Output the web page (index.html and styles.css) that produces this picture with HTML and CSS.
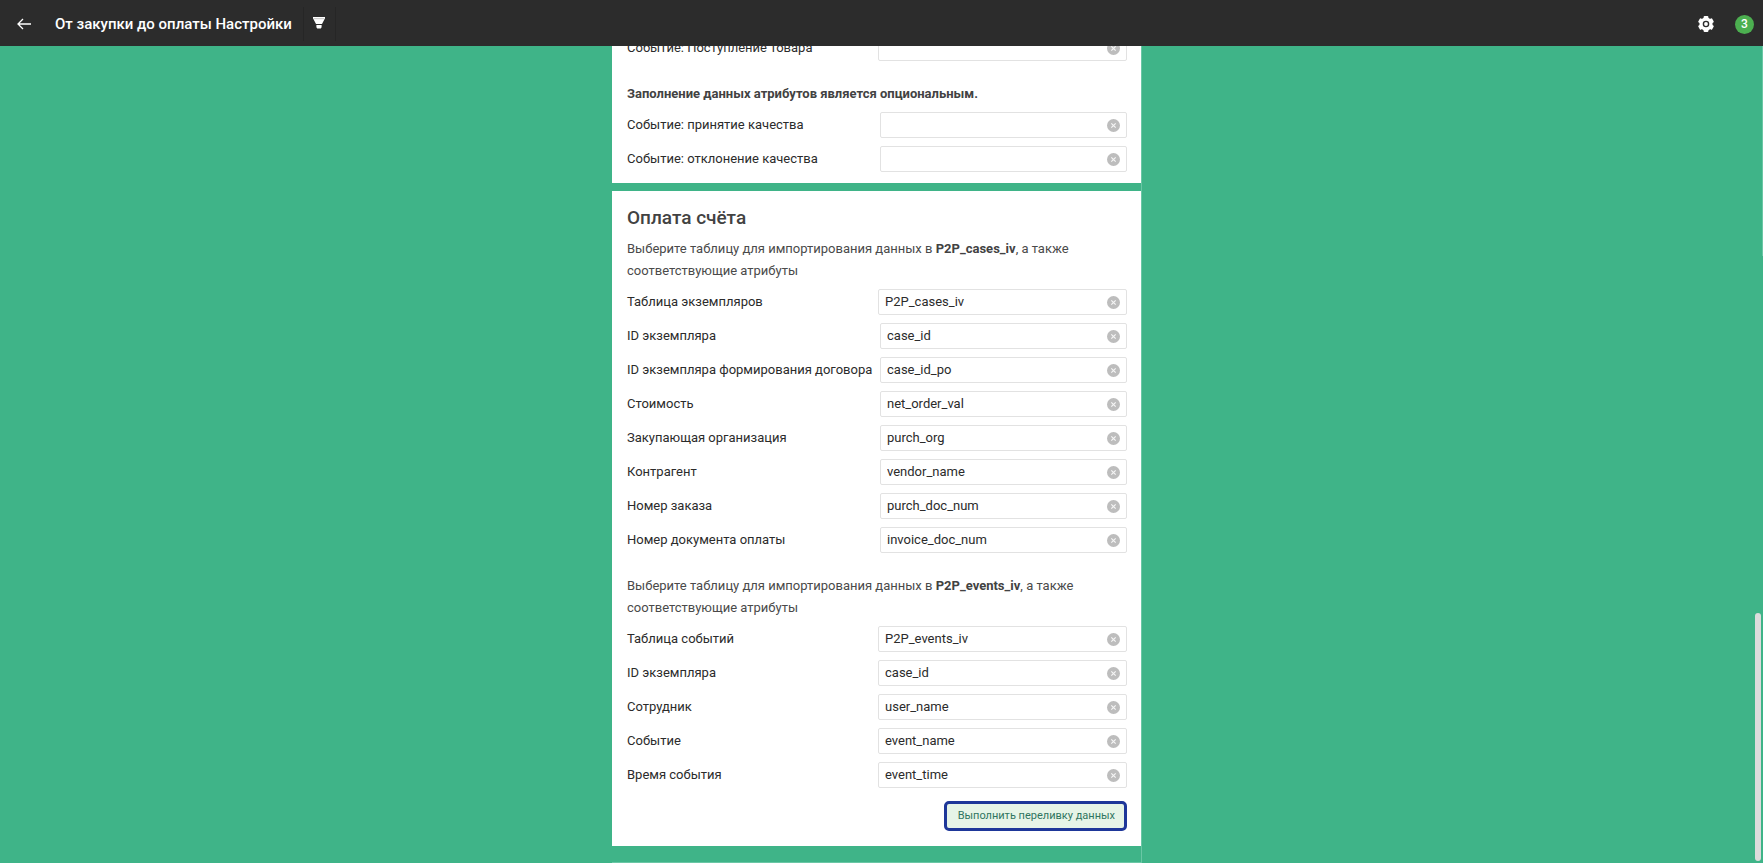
FILE: index.html
```html
<!DOCTYPE html>
<html lang="ru">
<head>
<meta charset="utf-8">
<title>От закупки до оплаты Настройки</title>
<link rel="stylesheet" href="styles.css">
</head>
<body>
<header class="topbar">
  <button class="icon-button back" type="button" aria-label="Назад">
    <svg width="14" height="12" viewBox="0 0 14 12" fill="none" stroke="currentColor" stroke-width="1.300"><path d="M14 6H1.200M6 1L1 6l5 5"/></svg>
  </button>
  <h1 class="title">От закупки до оплаты Настройки</h1>
  <button class="icon-button filter" type="button" aria-label="Фильтр">
    <svg width="12" height="12" viewBox="0 0 12 12" fill="currentColor"><path d="M0 0h12v1.200L9 7H3L0 1.200zM3.400 7.900h5.200v2.400L7.800 11.500H4.200l-.8-1.200z"/><path d="M1 1.700h10" stroke="#9a9a9a" stroke-width=".6"/></svg>
  </button>
  <button class="icon-button settings" type="button" aria-label="Настройки">
    <svg width="18" height="18" viewBox="0 0 18 18"><g fill="#fff"><circle cx="9" cy="9" r="6.600"/><g id="teeth"><rect x="6.600" y="1" width="4.800" height="16" rx="1"/><rect x="6.600" y="1" width="4.800" height="16" rx="1" transform="rotate(60 9 9)"/><rect x="6.600" y="1" width="4.800" height="16" rx="1" transform="rotate(120 9 9)"/></g></g><circle cx="9" cy="9" r="2.600" fill="none" stroke="#2c2c2c" stroke-width="1.400"/></svg>
  </button>
  <span class="badge">3</span>
</header>

<svg class="defs" aria-hidden="true"><symbol id="clear" viewBox="0 0 13 13"><circle cx="6.500" cy="6.500" r="6.500" fill="#bdbdbd"/><path d="M4.300 4.300l4.400 4.400M8.700 4.300L4.300 8.700" stroke="#f4f4f4" stroke-width="1.200"/></symbol></svg>

<main class="page">
  <div class="board">
    <section class="card">
      <div class="rows">
        <div class="row"><label for="a1">Событие: Поступление товара</label><span class="field wide"><input id="a1" type="text"><button class="clear" type="button" aria-label="Очистить"><svg><use href="#clear"/></svg></button></span></div>
      </div>
      <p class="note next"><strong>Заполнение данных атрибутов является опциональным.</strong></p>
      <div class="rows">
        <div class="row"><label for="a2">Событие: принятие качества</label><span class="field"><input id="a2" type="text"><button class="clear" type="button" aria-label="Очистить"><svg><use href="#clear"/></svg></button></span></div>
        <div class="row"><label for="a3">Событие: отклонение качества</label><span class="field"><input id="a3" type="text"><button class="clear" type="button" aria-label="Очистить"><svg><use href="#clear"/></svg></button></span></div>
      </div>
    </section>

    <section class="card payment">
      <h2 class="heading">Оплата счёта</h2>
      <p class="note">Выберите таблицу для импортирования данных в <strong>P2P_cases_iv</strong>, а также соответствующие атрибуты</p>
      <div class="rows">
        <div class="row"><label for="b1">Таблица экземпляров</label><span class="field wide"><input id="b1" type="text" value="P2P_cases_iv"><button class="clear" type="button" aria-label="Очистить"><svg><use href="#clear"/></svg></button></span></div>
        <div class="row"><label for="b2">ID экземпляра</label><span class="field"><input id="b2" type="text" value="case_id"><button class="clear" type="button" aria-label="Очистить"><svg><use href="#clear"/></svg></button></span></div>
        <div class="row"><label for="b3">ID экземпляра формирования договора</label><span class="field"><input id="b3" type="text" value="case_id_po"><button class="clear" type="button" aria-label="Очистить"><svg><use href="#clear"/></svg></button></span></div>
        <div class="row"><label for="b4">Стоимость</label><span class="field"><input id="b4" type="text" value="net_order_val"><button class="clear" type="button" aria-label="Очистить"><svg><use href="#clear"/></svg></button></span></div>
        <div class="row"><label for="b5">Закупающая организация</label><span class="field"><input id="b5" type="text" value="purch_org"><button class="clear" type="button" aria-label="Очистить"><svg><use href="#clear"/></svg></button></span></div>
        <div class="row"><label for="b6">Контрагент</label><span class="field"><input id="b6" type="text" value="vendor_name"><button class="clear" type="button" aria-label="Очистить"><svg><use href="#clear"/></svg></button></span></div>
        <div class="row"><label for="b7">Номер заказа</label><span class="field"><input id="b7" type="text" value="purch_doc_num"><button class="clear" type="button" aria-label="Очистить"><svg><use href="#clear"/></svg></button></span></div>
        <div class="row"><label for="b8">Номер документа оплаты</label><span class="field"><input id="b8" type="text" value="invoice_doc_num"><button class="clear" type="button" aria-label="Очистить"><svg><use href="#clear"/></svg></button></span></div>
      </div>
      <p class="note next">Выберите таблицу для импортирования данных в <strong>P2P_events_iv</strong>, а также соответствующие атрибуты</p>
      <div class="rows">
        <div class="row"><label for="c1">Таблица событий</label><span class="field wide"><input id="c1" type="text" value="P2P_events_iv"><button class="clear" type="button" aria-label="Очистить"><svg><use href="#clear"/></svg></button></span></div>
        <div class="row"><label for="c2">ID экземпляра</label><span class="field wide"><input id="c2" type="text" value="case_id"><button class="clear" type="button" aria-label="Очистить"><svg><use href="#clear"/></svg></button></span></div>
        <div class="row"><label for="c3">Сотрудник</label><span class="field wide"><input id="c3" type="text" value="user_name"><button class="clear" type="button" aria-label="Очистить"><svg><use href="#clear"/></svg></button></span></div>
        <div class="row"><label for="c4">Событие</label><span class="field wide"><input id="c4" type="text" value="event_name"><button class="clear" type="button" aria-label="Очистить"><svg><use href="#clear"/></svg></button></span></div>
        <div class="row"><label for="c5">Время события</label><span class="field wide"><input id="c5" type="text" value="event_time"><button class="clear" type="button" aria-label="Очистить"><svg><use href="#clear"/></svg></button></span></div>
      </div>
      <button class="run" type="button">Выполнить переливку данных</button>
    </section>
  </div>
  <div class="rail"><div class="thumb"></div></div>
</main>
</body>
</html>
```
FILE: styles.css
```css
* { box-sizing: border-box; }

body {
  margin: 0;
  height: 100vh;
  display: flex;
  flex-direction: column;
  overflow: hidden;
  background: #3fb488;
  color: #2b2b2b;
  font: 13px/22px Roboto, "Noto Sans", sans-serif;
}

button, input { font: inherit; color: inherit; margin: 0; }
h1, h2, p { margin: 0; }
.defs { position: absolute; width: 0; height: 0; }

.topbar {
  flex: none;
  height: 46px;
  display: flex;
  align-items: center;
  padding: 2px 9px 0 0;
  background: #2c2c2c;
  color: #fff;
}

.icon-button {
  display: flex;
  align-items: center;
  justify-content: center;
  padding: 0;
  border: 0;
  background: none;
}

.back { width: 47px; height: 44px; }
.title { margin-left: 8px; font-size: 15px; font-weight: 500; }

.filter {
  width: 33px;
  height: 34px;
  margin-left: 11px;
  border: solid #262626;
  border-width: 0 1px;
}

.filter svg { margin-bottom: 2px; }
.settings { margin-left: auto; }

.badge {
  width: 19px;
  height: 19px;
  margin-left: 20px;
  border-radius: 50%;
  background: #4caf50;
  font-size: 12px;
  line-height: 19px;
  font-weight: 500;
  text-align: center;
}

.page {
  flex: 1;
  min-height: 0;
  display: flex;
  overflow: hidden;
}

.board {
  width: 100%;
  max-width: 530px;
  margin: 0 auto;
  display: flex;
  flex-direction: column;
  justify-content: flex-end;
  gap: 8px;
  padding-bottom: 16px;
  border: solid #6ac7a5;
  border-width: 0 1px 1px 0;
}

.card {
  flex: none;
  display: flex;
  flex-direction: column;
  padding: 12px 14px 11px 15px;
  background: #fff;
}

.payment { padding-bottom: 15px; }
.heading { margin: 3px 0 8px; font-size: 19px; line-height: 24px; font-weight: 500; color: #424242; }
.note { margin-bottom: 7px; color: #4a4a4a; }
.note strong { font-weight: 700; color: #424242; }
.next { margin-top: 22px; }
.rows { display: flex; flex-direction: column; gap: 8px; }
.row { display: flex; align-items: center; justify-content: space-between; }
.row label { white-space: nowrap; }

.field {
  width: 247px;
  height: 26px;
  display: flex;
  align-items: center;
  padding: 0 6px;
  border: 1px solid #e2e2e2;
  border-radius: 2px;
}

.wide { width: 249px; }
.field input { flex: 1; min-width: 0; padding: 0; border: 0; outline: 0; background: none; }
.clear { display: flex; padding: 0; border: 0; background: none; }
.clear svg { width: 13px; height: 13px; }

.run {
  align-self: flex-end;
  height: 30px;
  margin-top: 13px;
  padding: 0 9px 0 11px;
  border: 3px solid #1e3799;
  border-radius: 5px;
  background: #e6f4e7;
  color: #2f7560;
  font-size: 11px;
}

.rail {
  flex: none;
  width: 9px;
  display: flex;
  flex-direction: column;
  justify-content: flex-end;
  padding: 0 2px 0 1px;
  background: linear-gradient(#6ac7a5, #6ac7a5) top right / 1px 210px no-repeat;
}

.thumb { height: 248px; margin-bottom: 2px; border-radius: 3px; background: #dcdcdc; }
```
